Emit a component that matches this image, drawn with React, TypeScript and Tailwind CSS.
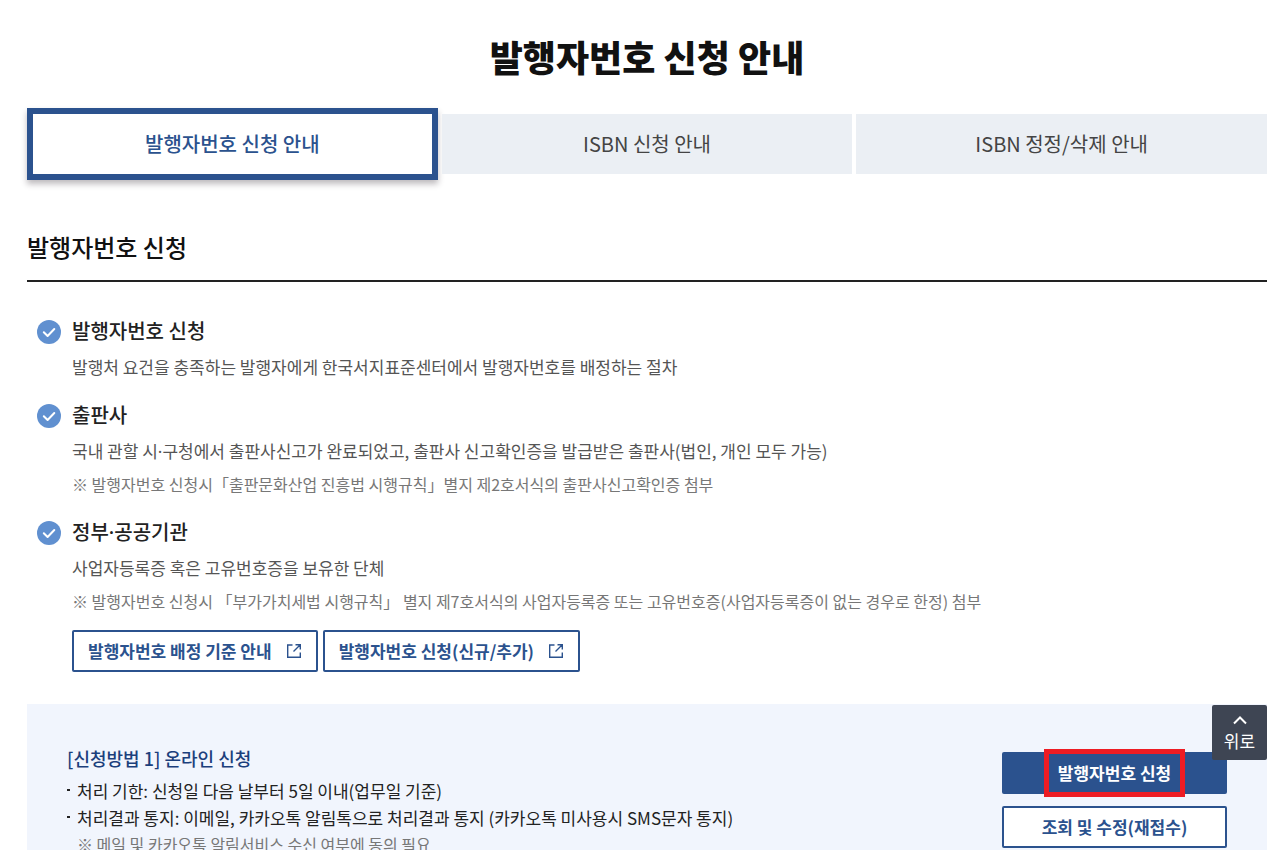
import { useState, type ReactNode } from 'react';

const tabs = ['발행자번호 신청 안내', 'ISBN 신청 안내', 'ISBN 정정/삭제 안내'];

function CheckIcon() {
  return (
    <svg className="mt-px h-6 w-6 shrink-0" viewBox="0 0 24 24" fill="none" aria-hidden="true">
      <circle cx="12" cy="12" r="12" fill="#6090d0" />
      <path d="M6.8 12.2l3.8 3.8 6.7-7" stroke="#fff" strokeWidth="2" strokeLinecap="round" strokeLinejoin="round" />
    </svg>
  );
}

function ExternalIcon() {
  return (
    <svg className="h-4 w-4" viewBox="0 0 16 16" fill="none" stroke="currentColor" strokeWidth="1.4" aria-hidden="true">
      <path d="M6.5 2H1.7v12.3h12.6V9.5M9.5 1.7h4.8v4.8M14 2L7.5 8.5" />
    </svg>
  );
}

// The CJK middle dot is too wide between Hangul words
function MidDot() {
  return <span className="font-['Noto_Sans',sans-serif] leading-none">·</span>;
}

function InfoItem({ title, children }: { title: ReactNode; children: ReactNode }) {
  return (
    <li className="flex gap-[11px]">
      <CheckIcon />
      <div className="min-w-0 flex-1">
        <h3 className="text-[20px] leading-6 font-medium text-[#222]">{title}</h3>
        {children}
      </div>
    </li>
  );
}

function Description({ children }: { children: ReactNode }) {
  return <p className="mt-2 text-[17px] leading-8 text-[#555]">{children}</p>;
}

function Note({ children }: { children: ReactNode }) {
  return <p className="mt-0.5 text-[16px] leading-[31px] text-[#777]">{children}</p>;
}

function LinkButton({ children }: { children: ReactNode }) {
  return (
    <a
      href="#"
      className="flex h-[42px] items-center gap-3.5 rounded-xs border-2 border-[#2b528e] bg-white px-3.5 text-[17px] font-bold text-[#2b528e]"
    >
      {children}
      <ExternalIcon />
    </a>
  );
}

export default function App() {
  const [active, setActive] = useState(0);

  return (
    <div className="min-h-screen bg-white font-['Noto_Sans_CJK_KR',sans-serif] text-[#222]">
      <main className="pt-8 pr-[5px] pl-[27px]">
        <h1 className="text-center font-['Noto_Sans_CJK_KR_Black','Noto_Sans_CJK_KR',sans-serif] text-[36px] leading-12 font-black text-[#111]">
          발행자번호 신청 안내
        </h1>

        <nav className="mt-[34px] grid grid-cols-3 gap-1">
          {tabs.map((tab, i) => (
            <button
              key={tab}
              type="button"
              onClick={() => setActive(i)}
              className={
                i === active
                  ? '-my-1.5 h-[72px] border-6 border-[#2b528e] bg-white text-[20px] font-medium text-[#2b528e] shadow-[0_4px_6px_rgba(40,30,40,0.3)]'
                  : 'h-[60px] bg-[#ebeff4] text-[20px] text-[#444]'
              }
            >
              {tab}
            </button>
          ))}
        </nav>

        <h2 className="mt-14 border-b-2 border-[#222] pb-4 text-[24px] leading-[34px] font-medium text-[#111]">
          발행자번호 신청
        </h2>

        <ul className="mt-[37px] flex flex-col gap-5 pl-2.5">
          <InfoItem title="발행자번호 신청">
            <Description>
              발행처 요건을 충족하는 발행자에게 한국서지표준센터에서 발행자번호를 배정하는 절차
            </Description>
          </InfoItem>
          <InfoItem title="출판사">
            <Description>
              국내 관할 시
              <MidDot />
              구청에서 출판사신고가 완료되었고, 출판사 신고확인증을 발급받은 출판사(법인, 개인 모두 가능)
            </Description>
            <Note>※ 발행자번호 신청시「출판문화산업 진흥법 시행규칙」별지 제2호서식의 출판사신고확인증 첨부</Note>
          </InfoItem>
          <InfoItem
            title={
              <>
                정부
                <MidDot />
                공공기관
              </>
            }
          >
            <Description>사업자등록증 혹은 고유번호증을 보유한 단체</Description>
            <Note>
              ※ 발행자번호 신청시 「부가가치세법 시행규칙」 별지 제7호서식의 사업자등록증 또는 고유번호증(사업자등록증이
              없는 경우로 한정) 첨부
            </Note>
            <div className="mt-[13px] flex gap-[5px]">
              <LinkButton>발행자번호 배정 기준 안내</LinkButton>
              <LinkButton>발행자번호 신청(신규/추가)</LinkButton>
            </div>
          </InfoItem>
        </ul>

        <section className="mt-8 flex items-start justify-between bg-[#f1f5fd] px-10 pt-10">
          <div>
            <h3 className="text-[18px] leading-7 font-medium text-[#1c3f7c]">[신청방법 1] 온라인 신청</h3>
            <ul className="mt-[5px] text-[17px] leading-[27px] text-[#222]">
              <li className="flex items-start gap-[7px]">
                <span className="mt-3 h-0.5 w-[3px] bg-[#222]" />
                처리 기한: 신청일 다음 날부터 5일 이내(업무일 기준)
              </li>
              <li className="flex items-start gap-[7px]">
                <span className="mt-3 h-0.5 w-[3px] bg-[#222]" />
                처리결과 통지: 이메일, 카카오톡 알림톡으로 처리결과 통지 (카카오톡 미사용시 SMS문자 통지)
              </li>
            </ul>
            <p className="pl-2.5 text-[16px] leading-[27px] text-[#777]">
              ※ 메일 및 카카오톡 알림서비스 수신 여부에 동의 필요
            </p>
          </div>
          <div className="mt-2 flex w-[225px] flex-col gap-3 text-[17px] font-bold">
            <button type="button" className="relative h-[42px] rounded-xs bg-[#2b528e] text-white">
              발행자번호 신청
              <span className="absolute -inset-y-[3px] right-[42px] left-[42px] border-5 border-[#ed1c24]" />
            </button>
            <button type="button" className="h-[42px] rounded-xs border-2 border-[#2b528e] bg-white text-[#2b528e]">
              조회 및 수정(재접수)
            </button>
          </div>
        </section>
      </main>

      <button
        type="button"
        onClick={() => window.scrollTo({ top: 0, behavior: 'smooth' })}
        className="fixed right-[5px] bottom-[90px] flex h-[55px] w-[55px] flex-col items-center rounded-xs bg-[#3e4553] pt-2.5 text-[17px] leading-6 text-white"
      >
        <svg className="mb-1 h-2.5 w-3.5 shrink-0" viewBox="0 0 14 10" fill="none" aria-hidden="true">
          <path d="M1 8.5l6-6 6 6" stroke="#fff" strokeWidth="2" />
        </svg>
        위로
      </button>
    </div>
  );
}
